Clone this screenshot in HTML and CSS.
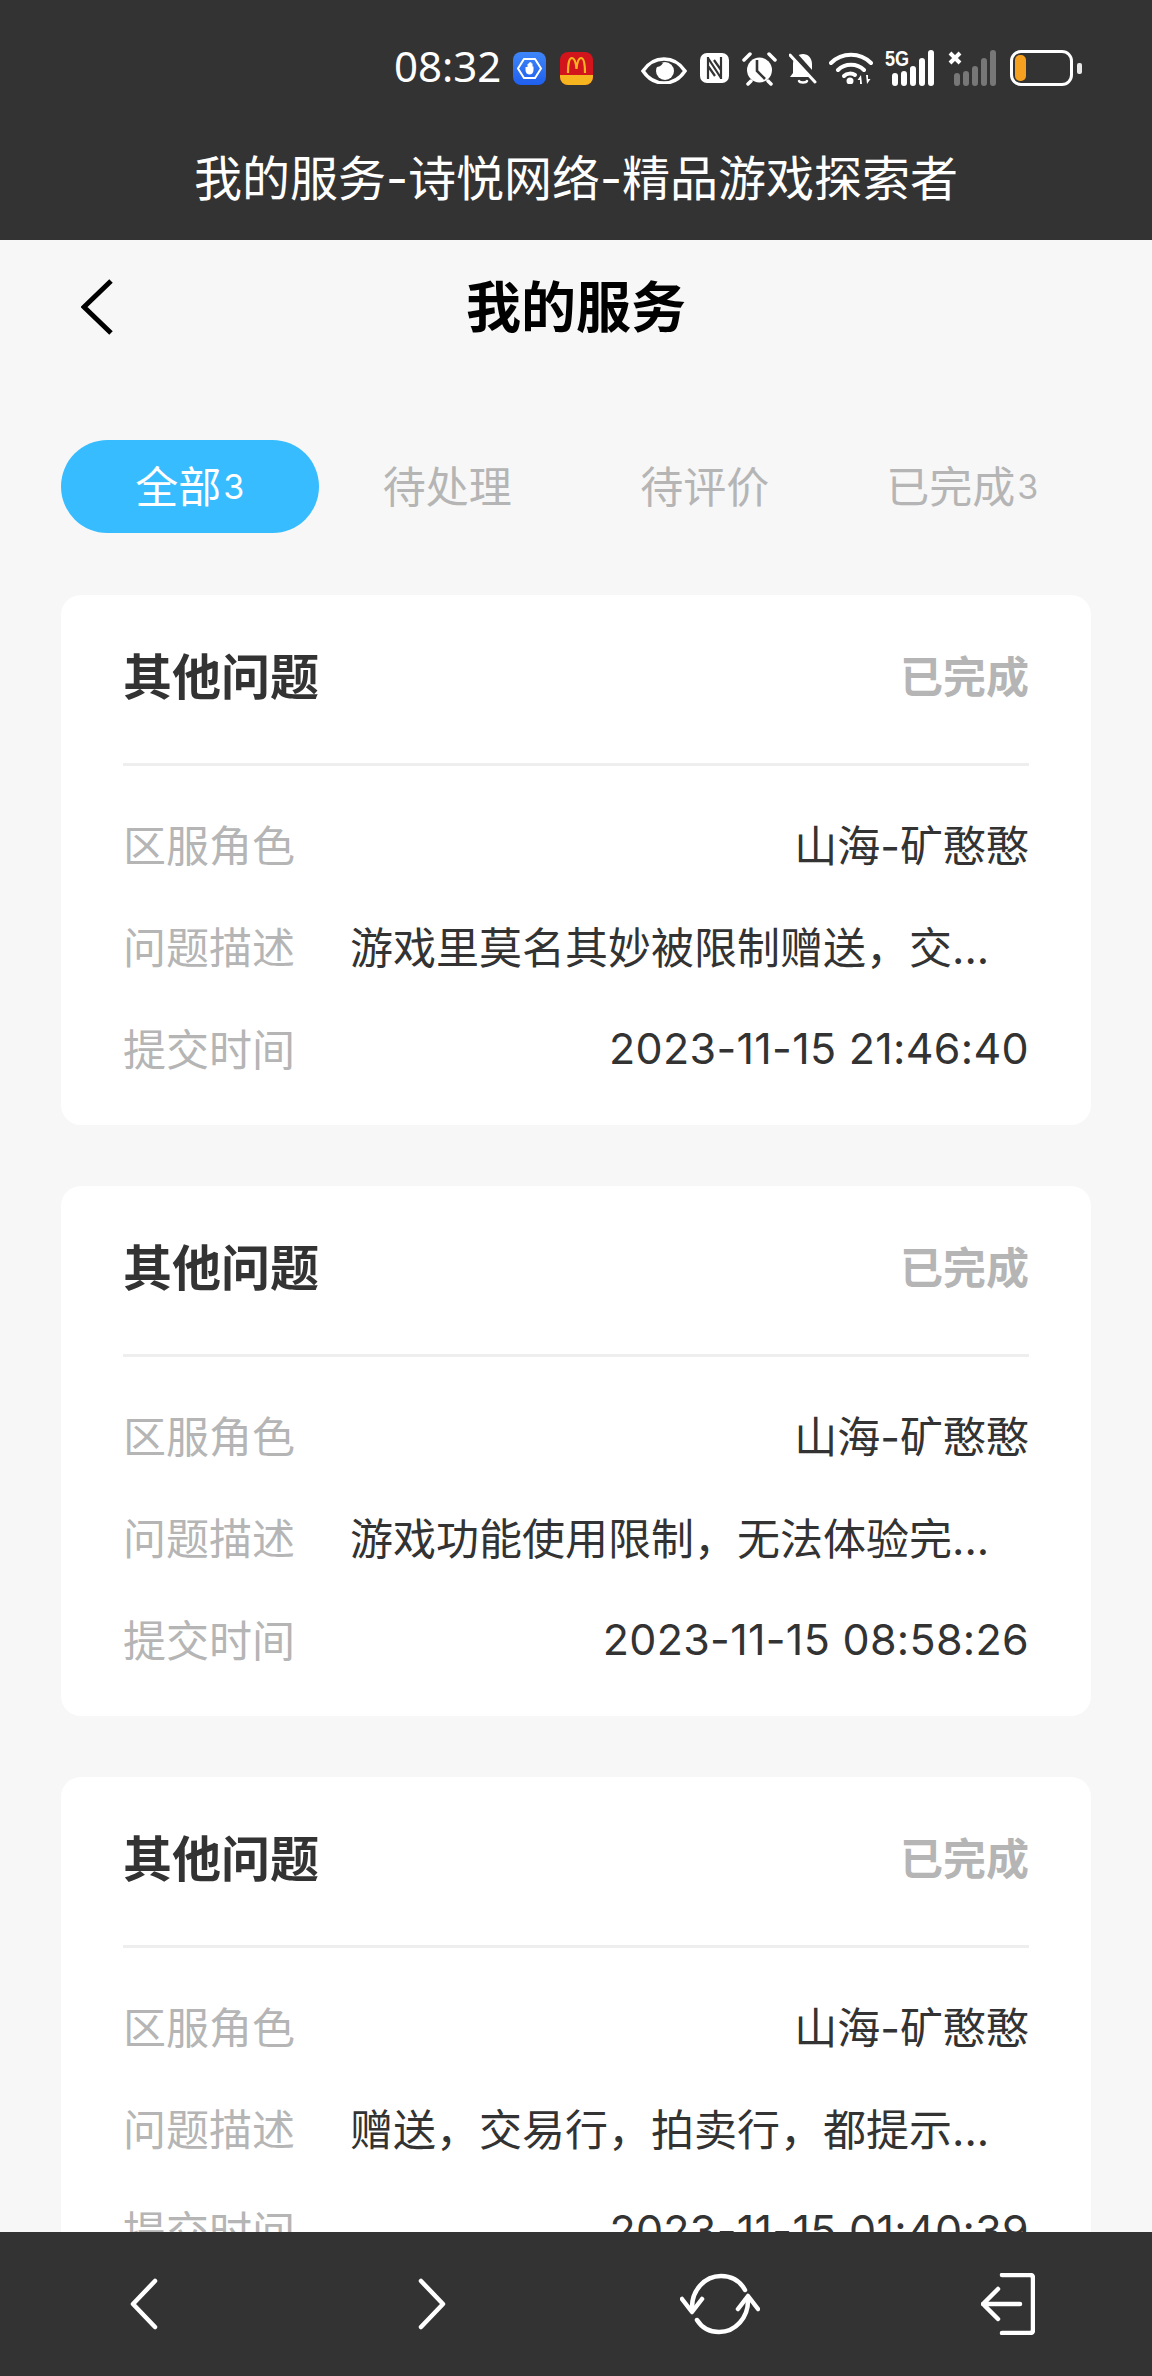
FILE: index.html
```html
<!DOCTYPE html>
<html lang="zh-CN">
<head>
    <meta charset="UTF-8">
    <meta name="viewport" content="width=device-width, initial-scale=1.0">
    <title>我的服务</title>
    <link rel="stylesheet" href="styles.css">
</head>
<body>
    <header class="top-bar">
        <div class="status-bar">
            <span class="status-time">08:32</span>
            <svg class="app-icon" width="33" height="33" viewBox="0 0 33 33">
                <defs>
                    <linearGradient id="blue" x1="0" y1="0" x2="0" y2="1">
                        <stop offset="0" stop-color="#3f86f8"/>
                        <stop offset="1" stop-color="#1f5fee"/>
                    </linearGradient>
                </defs>
                <rect width="33" height="33" rx="8" fill="url(#blue)"/>
                <path d="M11 7h11l6 9.500-6 9.500H11L5 16.500z" fill="none" stroke="#fff" stroke-width="2"/>
                <path d="M12.500 15v3c0 3 2 4.500 4 4.500s4-1.500 4-4.500v-3.500h-1v-3h-1v-1h-1v-.5h-1v1h-1v1h-1v3z" fill="#fff"/>
            </svg>
            <svg class="app-icon app-icon-last" width="33" height="33" viewBox="0 0 33 33">
                <rect width="33" height="33" rx="8" fill="#d2141c"/>
                <path d="M0 23h33v2a8 8 0 0 1-8 8H8a8 8 0 0 1-8-8z" fill="#f6b51e"/>
                <path d="M8 21c0-9 1-15 4-15s4 6 4.500 11c.5-5 1.500-11 4.500-11s4 6 4 15" fill="none" stroke="#f6b51e" stroke-width="2.200"/>
            </svg>
            <svg class="sys-icon" width="46" height="32" viewBox="0 0 46 32">
                <path d="M2 19C8 10 15 7 23 7s15 3 21 12c-6 9-13 12-21 12S8 28 2 19z" fill="none" stroke="#fff" stroke-width="3.500"/>
                <circle cx="24" cy="19" r="9" fill="#fff"/>
                <path d="M15 15c3 0 5-1 7-4l-4-1z" fill="#333"/>
            </svg>
            <svg class="sys-icon" width="31" height="32" viewBox="0 0 31 32">
                <rect x="1" y="1" width="29" height="30" rx="7" fill="#fff"/>
                <path d="M9 27V5M22 27V5M9 6l13 20M9 14l7 10M22 18l-7-10" fill="none" stroke="#333" stroke-width="2.200"/>
            </svg>
            <svg class="sys-icon" width="35" height="35" viewBox="0 0 35 35">
                <circle cx="17.500" cy="19" r="12.500" fill="#fff"/>
                <path d="M2 9l6-6M33 9l-6-6M6 33l3-3M29 33l-3-3" stroke="#fff" stroke-width="3.500" stroke-linecap="round"/>
                <path d="M15 9v11l8 8" fill="none" stroke="#333" stroke-width="2.600"/>
            </svg>
            <svg class="sys-icon" width="28" height="32" viewBox="0 0 28 32">
                <path d="M14 2c5 0 9 4 9 10v9l4 4H1l3-4V12C4 6 9 2 14 2z" fill="#fff"/>
                <path d="M10 29c1 2 7 2 8 0" fill="none" stroke="#fff" stroke-width="2.500" stroke-linecap="round"/>
                <path d="M3 0l25 28" stroke="#333" stroke-width="6"/>
                <path d="M1 3l25 27" stroke="#fff" stroke-width="3" stroke-linecap="round"/>
            </svg>
            <svg class="sys-icon" width="44" height="32" viewBox="0 0 44 32">
                <path d="M2 11c11-11 29-11 40 0M9 18c7-7 19-7 26 0" fill="none" stroke="#fff" stroke-width="4" stroke-linecap="round"/>
                <path d="M15 24c3-3 8-3 11-1" fill="none" stroke="#fff" stroke-width="4" stroke-linecap="round"/>
                <circle cx="21" cy="29" r="3.500" fill="#fff"/>
                <path d="M32 23l-3.500 5H31v4h2zM38 32l3.500-5H39v-4h-2z" fill="#fff"/>
            </svg>
            <div class="signal">
                <span class="signal-tag">5G</span>
                <svg width="50" height="36" viewBox="0 0 50 36">
                    <path d="M10 33V26M19 33V24M28 33V19M37 33V11M46 33V3" stroke="#fff" stroke-width="6" stroke-linecap="round"/>
                </svg>
            </div>
            <svg class="sys-icon signal-off" width="48" height="36" viewBox="0 0 48 36">
                <path d="M2 3l10 10M12 3L2 13" stroke="#fff" stroke-width="4"/>
                <path d="M9 33V26M18 33V24M27 33V19M36 33V11M45 33V3" stroke="#777" stroke-width="6" stroke-linecap="round"/>
            </svg>
            <div class="battery">
                <div class="battery-body"><span class="battery-level"></span></div>
                <span class="battery-tip"></span>
            </div>
        </div>
        <div class="page-name">我的服务-诗悦网络-精品游戏探索者</div>
    </header>

    <main class="content">
        <div class="nav-head">
            <svg class="nav-back" width="32" height="56" viewBox="0 0 32 56">
                <path d="M30 2L3 28l27 26" fill="none" stroke="#000" stroke-width="5"/>
            </svg>
            <h1>我的服务</h1>
        </div>

        <div class="tabs">
            <span class="tab tab-active">全部<small>3</small></span>
            <span class="tab">待处理</span>
            <span class="tab">待评价</span>
            <span class="tab">已完成<small>3</small></span>
        </div>

        <section class="card">
            <div class="card-head">
                <h3>其他问题</h3>
                <span class="card-state">已完成</span>
            </div>
            <div class="row"><span class="row-label">区服角色</span><span class="row-value">山海-矿憨憨</span></div>
            <div class="row"><span class="row-label">问题描述</span><span class="row-value row-desc">游戏里莫名其妙被限制赠送，交...</span></div>
            <div class="row"><span class="row-label">提交时间</span><span class="row-value row-time">2023-11-15 21:46:40</span></div>
        </section>

        <section class="card">
            <div class="card-head">
                <h3>其他问题</h3>
                <span class="card-state">已完成</span>
            </div>
            <div class="row"><span class="row-label">区服角色</span><span class="row-value">山海-矿憨憨</span></div>
            <div class="row"><span class="row-label">问题描述</span><span class="row-value row-desc">游戏功能使用限制，无法体验完...</span></div>
            <div class="row"><span class="row-label">提交时间</span><span class="row-value row-time">2023-11-15 08:58:26</span></div>
        </section>

        <section class="card">
            <div class="card-head">
                <h3>其他问题</h3>
                <span class="card-state">已完成</span>
            </div>
            <div class="row"><span class="row-label">区服角色</span><span class="row-value">山海-矿憨憨</span></div>
            <div class="row"><span class="row-label">问题描述</span><span class="row-value row-desc">赠送，交易行，拍卖行，都提示...</span></div>
            <div class="row"><span class="row-label">提交时间</span><span class="row-value row-time">2023-11-15 01:40:39</span></div>
        </section>
    </main>

    <footer class="bottom-bar">
        <svg width="34" height="52" viewBox="0 0 34 52">
            <path d="M28 3L6 26l22 23" fill="none" stroke="#fff" stroke-width="4.500" stroke-linecap="round" stroke-linejoin="round"/>
        </svg>
        <svg width="34" height="52" viewBox="0 0 34 52">
            <path d="M6 3l22 23L6 49" fill="none" stroke="#fff" stroke-width="4.500" stroke-linecap="round" stroke-linejoin="round"/>
        </svg>
        <svg width="80" height="62" viewBox="0 0 80 62">
            <path d="M12 34C12 18 24 3 41 3c11 0 19 5 24 14M68 28c0 16-12 31-29 31-10 0-17-4-22-12" fill="none" stroke="#fff" stroke-width="4.500" stroke-linecap="round"/>
            <path d="M2 26l10 13 10-13M58 36l10-13 10 13" fill="none" stroke="#fff" stroke-width="4.500" stroke-linecap="round" stroke-linejoin="round"/>
        </svg>
        <svg width="54" height="62" viewBox="0 0 54 62">
            <path d="M21 2h28q3 0 3 3v52q0 3-3 3H21M2 31h37M17 16L2 31l15 15" fill="none" stroke="#fff" stroke-width="4.500" stroke-linecap="round" stroke-linejoin="round"/>
        </svg>
    </footer>
</body>
</html>
```

FILE: styles.css
```css
* {
    margin: 0;
    padding: 0;
    box-sizing: border-box;
}

body {
    font-family: Inter, "Noto Sans CJK SC", sans-serif;
    background: #f7f7f7;
    color: #333333;
    width: 1152px;
    height: 2376px;
    display: flex;
    flex-direction: column;
    overflow: hidden;
}

.top-bar {
    background: #333333;
    height: 240px;
    flex-shrink: 0;
    color: #ffffff;
}

.status-bar {
    height: 136px;
    padding-left: 394px;
    display: flex;
    align-items: center;
}

.status-time {
    font-family: "Noto Sans", sans-serif;
    font-size: 42px;
    line-height: 50px;
    padding-bottom: 4px;
    margin-right: 12px;
}

.app-icon {
    margin-right: 14px;
}

.app-icon-last {
    margin-right: 48px;
}

.sys-icon {
    margin-right: 12px;
}

.signal {
    position: relative;
    width: 50px;
    height: 36px;
    margin-right: 13px;
}

.signal-tag {
    position: absolute;
    left: 0;
    top: -2px;
    font-family: "Liberation Sans", sans-serif;
    font-size: 22px;
    font-weight: 700;
    line-height: 22px;
    transform: scaleX(0.82);
    transform-origin: left;
}

.signal-off {
    margin-right: 14px;
}

.battery {
    display: flex;
    align-items: center;
    gap: 4px;
}

.battery-body {
    width: 63px;
    height: 36px;
    border: 3px solid #ffffff;
    border-radius: 11px;
    padding: 2px;
}

.battery-level {
    display: block;
    width: 11px;
    height: 100%;
    background: #f5a01e;
    border-radius: 5px;
}

.battery-tip {
    width: 5px;
    height: 11px;
    background: #e8e8e8;
    border-radius: 2px;
}

.page-name {
    text-align: center;
    font-size: 48px;
    line-height: 60px;
    margin-top: 13px;
}

.content {
    flex: 1;
    min-height: 0;
    overflow: hidden;
    padding: 0 61px;
}

.nav-head {
    position: relative;
    height: 126px;
    display: flex;
    align-items: center;
    justify-content: center;
}

.nav-head h1 {
    font-size: 55px;
    font-weight: 700;
    color: #000000;
}

.nav-back {
    position: absolute;
    left: 20px;
    top: 39px;
}

.tabs {
    margin-top: 74px;
    height: 93px;
    display: flex;
    align-items: center;
}

.tab {
    width: 258px;
    height: 93px;
    border-radius: 47px;
    display: flex;
    align-items: center;
    justify-content: center;
    font-size: 43px;
    color: #b5b5b5;
    padding-bottom: 6px;
}

.tab small {
    font-size: 34px;
    margin-left: 2px;
    padding-top: 5px;
}

.tab-active {
    background: #36bcff;
    color: #ffffff;
}

.card {
    background: #ffffff;
    border-radius: 20px;
    padding: 0 62px;
    height: 530px;
    margin-bottom: 61px;
}

.tabs + .card {
    margin-top: 62px;
}

.card-head {
    height: 171px;
    border-bottom: 3px solid #eeeeee;
    display: flex;
    align-items: center;
    justify-content: space-between;
    padding-bottom: 11px;
}

.card-head h3 {
    font-size: 49px;
    font-weight: 700;
}

.card-state {
    font-size: 43px;
    font-weight: 700;
    color: #b5b5b5;
}

.row {
    height: 102px;
    display: flex;
    align-items: center;
    justify-content: space-between;
    font-size: 43px;
}

.card-head + .row {
    margin-top: 26px;
}

.row-label {
    color: #b5b5b5;
    flex-shrink: 0;
    margin-right: 55px;
}

.row-value {
    white-space: nowrap;
}

.row-desc {
    margin-right: auto;
}

.row-time {
    letter-spacing: 0.3px;
    padding-top: 2px;
}

.bottom-bar {
    background: #333333;
    height: 144px;
    flex-shrink: 0;
    position: relative;
    display: grid;
    grid-template-columns: repeat(4, 288px);
    justify-items: center;
    align-items: center;
}
```
